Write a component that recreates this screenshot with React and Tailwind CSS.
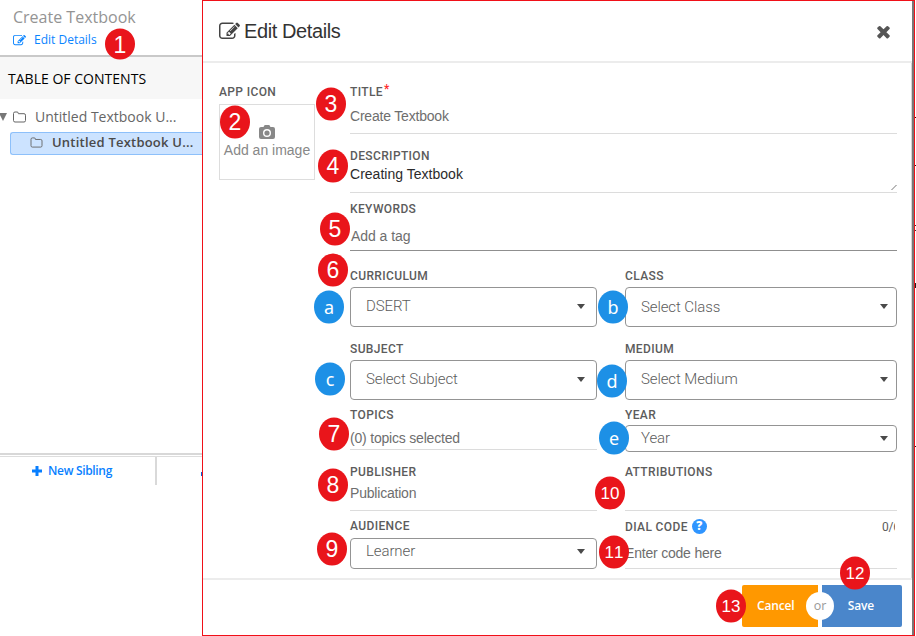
import React from 'react';

const PENCIL =
  'M888 1184l116-116-152-152-116 116v56h96v96h56zm440-720q-16-16-33 1l-350 350q-17 17-1 33t33-1l350-350q17-17 1-33zm80 594v190q0 119-84.500 203.500t-203.500 84.500h-832q-119 0-203.500-84.500t-84.500-203.500v-832q0-119 84.500-203.500t203.500-84.500h832q63 0 117 25 15 7 18 23 3 17-9 29l-49 49q-14 14-32 8-23-6-45-6h-832q-66 0-113 47t-47 113v832q0 66 47 113t113 47h832q66 0 113-47t47-113v-126q0-13 9-22l64-64q15-15 35-7t20 29zm-96-738l288 288-672 672h-288v-288zm444 132l-92 92-288-288 92-92q28-28 68-28t68 28l152 152q28 28 28 68t-28 68z';
const TIMES =
  'M1490 1322q0 40-28 68l-136 136q-28 28-68 28t-68-28l-294-294-294 294q-28 28-68 28t-68-28l-136-136q-28-28-28-68t28-68l294-294-294-294q-28-28-28-68t28-68l136-136q28-28 68-28t68 28l294 294 294-294q28-28 68-28t68 28l136 136q28 28 28 68t-28 68l-294 294 294 294q28 28 28 68z';

function Glyph({ d, className }) {
  return (
    <svg viewBox="0 0 1792 1792" className={className} fill="currentColor">
      <path d={d} />
    </svg>
  );
}

function Folder({ className }) {
  return (
    <svg viewBox="0 0 13 12" className={className} fill="none" stroke="currentColor">
      <path d="M.5 9.500V2.500Q.5 1 2 1H4Q5.300 1 5.300 2.200V2.700H11Q12.500 2.700 12.500 4.200V9.500Q12.500 11 11 11H2Q.5 11 .5 9.500Z" />
    </svg>
  );
}

function Label({ children, className = '' }) {
  return (
    <div className={`flex h-[18px] items-center whitespace-nowrap pt-px font-[Roboto,sans-serif] text-[12px] font-medium leading-[18px] tracking-[0.37px] text-[#5c5c5c] ${className}`}>
      {children}
    </div>
  );
}

function Input({ children, className = '', tone = 'border-[#dcdcdc] text-[#6e6e6e] tracking-[-0.2px]' }) {
  return (
    <div className={`whitespace-nowrap border-b text-[14px] ${tone} ${className}`}>
      {children}
    </div>
  );
}

function Select({ children, className = '', arrow = 'mr-[11px]' }) {
  return (
    <div className={`flex items-start justify-between rounded-[4px] border border-[#949494] pl-[15px] font-[Roboto,sans-serif] text-[15px] font-light tracking-[-0.1px] text-[#5c5c5c] ${className}`}>
      <span className="whitespace-nowrap">{children}</span>
      <span className={`flex h-[1lh] items-center ${arrow}`}>
        <svg viewBox="0 0 8 5" className="h-[5px] w-[8px] fill-[#4a4a4a]">
          <path d="M0 0H8L4 5Z" />
        </svg>
      </span>
    </div>
  );
}

function Sidebar() {
  return (
    <aside className="w-[202px] shrink-0 overflow-hidden font-['Open_Sans','Noto_Sans',sans-serif]">
      <div className="h-[57px] border-b-2 border-[#c9c9c9] pl-[13px] pt-[7px]">
        <div className="text-[16px] leading-[21px] text-[#949494]">Create Textbook</div>
        <div className="flex h-[24px] items-center text-[12px] text-[#0a84ff]">
          <Glyph d={PENCIL} className="mr-[8px] h-[13px] w-[13px]" />
          Edit Details
        </div>
      </div>
      <div className="flex h-[42px] items-center bg-[#f7f7f7] pl-[8px] text-[14px] tracking-[0.02px] text-black">
        TABLE OF CONTENTS
      </div>
      <div className="flex h-[33px] items-center pt-[2px] text-[14px] text-[#666]">
        <svg viewBox="0 0 7 8" className="h-[8px] w-[7px] fill-[#777]">
          <path d="M-1 0H7L3 8Z" />
        </svg>
        <Folder className="ml-[6px] mr-[9px] h-[12px] w-[13px] text-[#666]" />
        Untitled Textbook U...
      </div>
      <div className="ml-[10px] flex h-[23px] items-center rounded-l-[3px] border border-r-0 border-[#8dc0fa] bg-[#cce3ff] pb-[2px] pl-[19px] text-[13px] font-semibold tracking-[0.22px] text-[#4a4a4a]">
        <Folder className="mr-[9px] h-[11px] w-[13px] shrink-0 text-[#666]" />
        <span className="whitespace-nowrap">Untitled Textbook U...</span>
      </div>
      <div className="mt-[298px] h-[4px] border-b border-t-2 border-b-[#ddd] border-t-[#d8d8d8]" />
      <div className="flex h-[28px] items-center">
        <div className="flex h-full w-[157px] items-center border-r-2 border-[#d9d9d9] pl-[32px] text-[12px] font-semibold tracking-[-0.33px] text-[#087fff]">
          <svg viewBox="0 0 10 10" className="mr-[6px] h-[10px] w-[10px] fill-current">
            <path d="M3.500 0h3v3.500H10v3H6.500V10h-3V6.500H0v-3h3.500z" />
          </svg>
          New Sibling
        </div>
        <div className="ml-auto mt-[5px] h-[4px] w-px bg-[#0a60d0]" />
      </div>
    </aside>
  );
}

function Form() {
  return (
    <div className="flex h-[515px] border-r border-[#d5d5d5] pl-[16px] pt-[19px]">
      <div className="w-[131px] shrink-0">
        <Label>APP ICON</Label>
        <div className="mt-[4px] flex h-[76px] w-[96px] flex-col items-center border border-[#ddd] pt-[20px] text-[#888]">
          <svg viewBox="0 0 16 14" className="h-[14px] w-[16px]" fill="#888">
            <path fillRule="evenodd" d="M2 2H4.500L5.300.5Q5.500 0 6 0H10Q10.500 0 10.700.5L11.500 2H14Q16 2 16 4V12Q16 14 14 14H2Q0 14 0 12V4Q0 2 2 2ZM8 4A4 4 0 1 0 8 12A4 4 0 1 0 8 4ZM8 5.400A2.600 2.600 0 1 1 8 10.600A2.600 2.600 0 1 1 8 5.400Z" />
          </svg>
          <span className="mt-px whitespace-nowrap text-[14px] leading-[20px]">Add an image</span>
        </div>
      </div>
      <div className="w-[547px] shrink-0">
        <Label>TITLE<span className="mb-[5px] ml-px text-[12px] text-[#ff2a2a]">*</span></Label>
        <Input className="h-[34px] leading-[32px]">Create Textbook</Input>
        <Label className="mt-[12px]">DESCRIPTION</Label>
        <Input className="flex h-[29px] items-start justify-between leading-[20px]" tone="border-[#dcdcdc] text-[#2b2b2b] tracking-[0.02px]">
          Creating Textbook
          <svg viewBox="0 0 5 5" className="mt-[21px] h-[5px] w-[6px]" stroke="#777">
            <path d="M0 5L5 0" />
          </svg>
        </Input>
        <Label className="mt-[6px]">KEYWORDS</Label>
        <Input className="h-[34px] pl-px leading-[38px]" tone="border-[#8f8f8f] text-[#6e6e6e] tracking-[-0.05px]">Add a tag</Input>
        <div className="grid grid-cols-[247px_272px] gap-x-[28px]">
          <div className="pt-[15px]">
            <Label>CURRICULUM</Label>
            <Select className="mt-[3px] h-[40px] leading-[36px]">DSERT</Select>
          </div>
          <div className="pt-[15px]">
            <Label>CLASS</Label>
            <Select className="mt-[3px] h-[40px] leading-[38px]" arrow="mr-[8px] -mt-px">Select Class</Select>
          </div>
          <div className="pt-[12px]">
            <Label>SUBJECT</Label>
            <Select className="mt-[3px] h-[40px] leading-[36px]">Select Subject</Select>
          </div>
          <div className="pt-[12px]">
            <Label>MEDIUM</Label>
            <Select className="mt-[3px] h-[40px] leading-[36px]" arrow="mr-[8px]">Select Medium</Select>
          </div>
          <div className="h-[52px] pt-[5px]">
            <Label>TOPICS</Label>
            <Input className="h-[27px] leading-[30px]">(0) topics selected</Input>
          </div>
          <div className="h-[52px] pt-[5px]">
            <Label>YEAR</Label>
            <Select className="mt-[2px] h-[27px] leading-[25px]" arrow="mr-[8px]">Year</Select>
          </div>
          <div className="h-[59px] pt-[10px]">
            <Label>PUBLISHER</Label>
            <Input className="h-[31px] leading-[26px]">Publication</Input>
          </div>
          <div className="h-[59px] pt-[10px]">
            <Label>ATTRIBUTIONS</Label>
            <Input className="h-[31px]" />
          </div>
          <div className="pt-[5px]">
            <Label>AUDIENCE</Label>
            <Select className="mt-[4px] h-[31px] leading-[25px]">Learner</Select>
          </div>
          <div className="pt-[6px]">
            <Label>
              DIAL CODE
              <span className="mb-px ml-[4px] flex h-[15px] w-[15px] items-center justify-center rounded-full bg-[#2f95ff] font-['Open_Sans',sans-serif] text-[12px] font-extrabold leading-none tracking-normal text-white">?</span>
              <span className="ml-auto mr-[2px] w-[13px] overflow-hidden font-normal tracking-[-0.2px]">0/6</span>
            </Label>
            <Input className="h-[34px] leading-[37px]">Enter code here</Input>
          </div>
        </div>
      </div>
    </div>
  );
}

const badges = [
  ['1', 120, 44], ['2', 235, 121.5], ['3', 331, 103.5], ['4', 333, 165.5],
  ['5', 335, 228.5], ['6', 333, 269.5], ['7', 334, 433.5], ['8', 333, 484.5],
  ['9', 332, 548.5], ['10', 610, 492.5], ['11', 614, 551.5], ['12', 855, 572.5],
  ['13', 731, 605.5], ['a', 329, 306.5], ['b', 613, 306.5], ['c', 330, 378.5],
  ['d', 612, 380.5], ['e', 614, 437.5],
];

function Badge({ text, x, y }) {
  const letter = text >= 'a';
  const look = letter
    ? "bg-[#1d90e6] font-['Noto_Sans',sans-serif] text-[18px]"
    : text.length > 1
      ? 'bg-[#e9151b] pt-px text-[17px] [font-kerning:none]'
      : 'bg-[#e9151b] pt-px text-[23px]';
  return (
    <span
      className={`absolute flex w-[30px] -translate-x-1/2 -translate-y-1/2 items-center justify-center rounded-[50%] leading-none text-white ${text === '1' ? 'h-[31px]' : 'h-[33px]'} ${look}`}
      style={{ left: x, top: y }}
    >
      {text}
    </span>
  );
}

export default function App() {
  return (
    <div className="relative flex h-[636px] w-[916px] overflow-hidden bg-white font-['Liberation_Sans',Arial,sans-serif]">
      <Sidebar />
      <main className="flex h-[636px] w-[713px] shrink-0 border border-[#f01018]">
        <div className="flex w-[709px] flex-col">
          <header className="flex h-[62px] shrink-0 items-center border-b-2 border-[#ececec] pl-[16px] pr-[19px] text-[#333]">
            <Glyph d={PENCIL} className="mr-[4px] h-[21px] w-[21px] text-[#444]" />
            <h1 className="text-[20px] tracking-[-0.4px]">Edit Details</h1>
            <Glyph d={TIMES} className="ml-auto h-[19px] w-[19px] text-[#555]" />
          </header>
          <Form />
          <footer className="flex h-[57px] items-start justify-end border-t-2 border-[#ececec] pr-[10px] pt-[5px] font-['Open_Sans',sans-serif] text-[12px] font-semibold tracking-[-0.15px] text-white">
            <div className="flex h-[42px] w-[76px] items-center rounded-l-[2px] bg-[#ff9800] pb-px pl-[15px]">Cancel</div>
            <div className="relative h-[42px] w-[4px] bg-white">
              <span className="absolute left-[-12px] top-[7px] flex h-[28px] w-[28px] items-center justify-center rounded-full bg-white text-[12.500px] font-normal text-[#999]">or</span>
            </div>
            <div className="flex h-[42px] w-[80px] items-center justify-center rounded-r-[2px] bg-[#4a86cb] pb-px pr-[2px]">Save</div>
          </footer>
        </div>
        <div className="w-[2px] bg-[#777]" />
      </main>
      <div className="w-px pt-[117px]">
        <div className="h-px bg-[#400]" />
        <div className="mt-[47px] h-px bg-[#222]" />
        <div className="mt-[59px] h-[6px] border-y border-[#333]" />
        <div className="mt-[52px] h-[5px] bg-[#222]" />
        <div className="mt-[158px] h-px bg-[#222]" />
      </div>
      {badges.map(([text, x, y]) => (
        <Badge key={text} text={text} x={x} y={y} />
      ))}
    </div>
  );
}
